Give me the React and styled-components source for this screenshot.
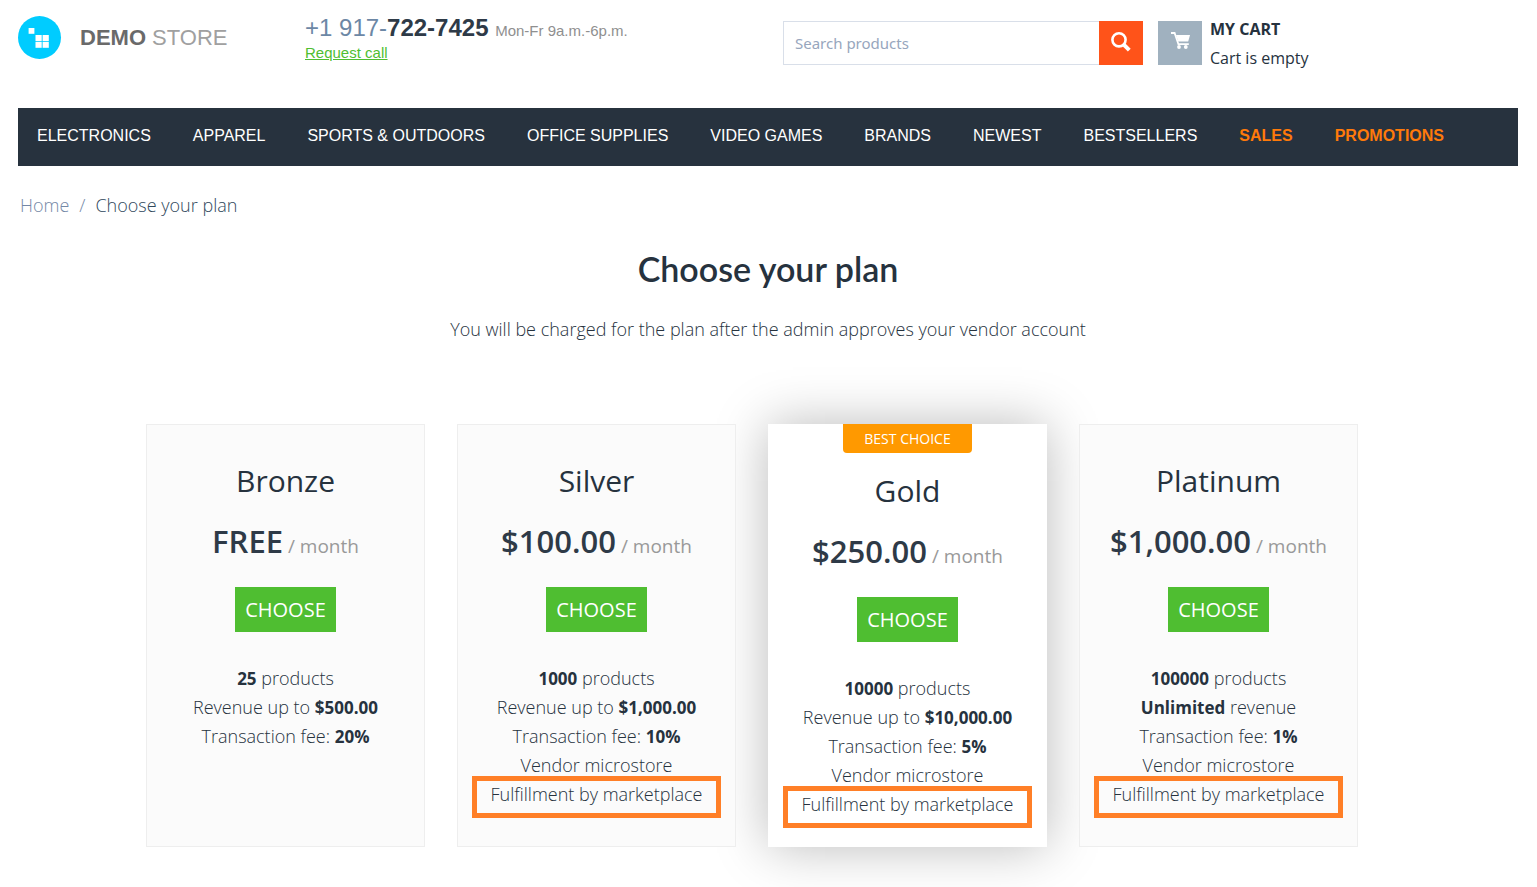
import React from "react";
import styled, { createGlobalStyle } from "styled-components";

const GlobalStyle = createGlobalStyle`
  *, *::before, *::after { box-sizing: border-box; }
  body {
    margin: 0;
    background: #fff;
    color: #26323e;
    font-family: "Open Sans", sans-serif;
    font-size: 18px;
    font-weight: 300;
    line-height: 29px;
  }
`;

const Page = styled.div`
  padding: 0 19px 40px 18px;
`;

const Header = styled.header`
  display: grid;
  grid-template-columns: 287fr 478fr 735fr;
  align-items: start;
  height: 108px;
  font-weight: 400;
`;

const Logo = styled.a`
  display: flex;
  align-items: center;
  gap: 18px;
  padding-top: 16px;
  text-decoration: none;
  white-space: nowrap;
`;

const LogoText = styled.span`
  font-family: "Liberation Sans", sans-serif;
  font-size: 22px;
  line-height: 24px;
  color: #a0a0a0;

  b { color: #6a6a6a; }
`;

const Contact = styled.div`
  padding-top: 14px;
  font-family: "Liberation Sans", sans-serif;
  white-space: nowrap;
`;

const Phone = styled.div`
  font-size: 24px;
  line-height: 28px;
  color: #6c87a5;

  b { color: #2e3a47; }
  small { font-size: 15px; color: #8f8f8f; }
`;

const RequestLink = styled.a`
  display: block;
  font-size: 15px;
  line-height: 16px;
  color: #4fbe31;
`;

const Tools = styled.div`
  display: flex;
  gap: 15px;
  padding-top: 21px;
`;

const Search = styled.form`
  display: flex;
  flex: 0 1 360px;
  height: 44px;
`;

const SearchInput = styled.input`
  flex: 1;
  min-width: 0;
  padding: 0 11px;
  border: 1px solid #d9dfe9;
  border-right: 0;
  border-radius: 0;
  font-family: "Noto Sans", sans-serif;
  font-size: 15px;
  color: #2e3a47;
  outline: none;

  &::placeholder { color: #97a6bd; opacity: 1; }
`;

const SearchButton = styled.button`
  display: flex;
  justify-content: center;
  width: 44px;
  padding: 10px 0 0;
  border: 0;
  background: #ff5319;
  cursor: pointer;
`;

const Cart = styled.a`
  display: flex;
  gap: 8px;
  color: inherit;
  text-decoration: none;
  font-size: 16px;
  white-space: nowrap;
`;

const CartIcon = styled.span`
  display: flex;
  justify-content: center;
  width: 44px;
  height: 44px;
  padding-top: 10px;
  background: #a0b1bf;
`;

const CartText = styled.span`
  display: flex;
  flex-direction: column;
  margin-top: -6px;

  b { font-weight: 700; }
`;

const Nav = styled.nav`
  display: flex;
  flex-wrap: wrap;
  gap: 0 42px;
  padding: 14px 19px 16px;
  background: #27323e;
  font-family: "Liberation Sans", sans-serif;
  font-size: 16px;
  line-height: 28px;
  white-space: nowrap;
`;

const NavLink = styled.a`
  color: ${(p) => (p.$hot ? "#ff7a0a" : "#fff")};
  font-weight: ${(p) => (p.$hot ? 700 : 400)};
  text-decoration: none;
`;

const Breadcrumbs = styled.nav`
  display: flex;
  gap: 10px;
  padding: 25px 2px 0;
  line-height: 28px;
  color: #7488a6;

  a { color: inherit; text-decoration: none; }
`;

const Current = styled.span`
  color: #2f485c;
`;

const Intro = styled.div`
  text-align: center;
`;

const Title = styled.h1`
  margin: 26px 0 0;
  font-family: Lato, sans-serif;
  font-size: 34px;
  font-weight: 600;
  line-height: 48px;
`;

const Lead = styled.p`
  margin: 22px 0 0;
`;

const Plans = styled.section`
  display: flex;
  gap: 32px;
  max-width: 1244px;
  margin: 80px auto 0;
  padding-right: 32px;
`;

const Card = styled.article`
  display: flex;
  flex: 1;
  flex-direction: column;
  align-items: center;
  min-width: 0;
  padding-bottom: 27px;
  border: 1px solid ${(p) => (p.$best ? "#fff" : "#eee")};
  background: ${(p) => (p.$best ? "#fff" : "#fbfbfb")};
  box-shadow: ${(p) => (p.$best ? "0 0 50px rgba(0, 0, 0, 0.27)" : "none")};
  position: relative;
  z-index: ${(p) => (p.$best ? 0 : 1)};
  text-align: center;
`;

const Badge = styled.span`
  position: absolute;
  top: -1px;
  padding: 0 21px;
  border-radius: 0 0 4px 4px;
  background: #ff9900;
  color: #fff;
  font-size: 14px;
  font-weight: 400;
  line-height: 29px;
  white-space: nowrap;
`;

const PlanName = styled.h2`
  margin: ${(p) => (p.$best ? 46 : 36)}px 0 0;
  font-size: 30px;
  font-weight: 400;
  line-height: 40px;
`;

const Price = styled.div`
  margin-top: 20px;
  font-size: 19px;
  font-weight: 400;
  line-height: 40px;
  color: #999;
  white-space: nowrap;

  b { font-size: 31px; font-weight: 600; color: #2e3a47; }
`;

const Choose = styled.button`
  height: 45px;
  margin: 21px 0 32px;
  padding: 0 10px;
  border: 0;
  background: #4fbe31;
  color: #fff;
  font-family: inherit;
  font-size: 20px;
  cursor: pointer;
`;

const Features = styled.ul`
  display: flex;
  flex-direction: column;
  align-items: center;
  margin: 0;
  padding: 0;
  list-style: none;
  white-space: nowrap;

  b { font-size: 17px; font-weight: 700; }
`;

const Marked = styled.li`
  position: relative;

  &::after {
    content: "";
    position: absolute;
    inset: -4px -19px -9px;
    border: 5px solid #ff7f27;
  }
`;

const categories = [
  "Electronics", "Apparel", "Sports & Outdoors", "Office Supplies",
  "Video Games", "Brands", "Newest", "Bestsellers",
];

const plans = [
  { name: "Bronze", price: "FREE", products: "25", revenue: "$500.00", fee: "20%" },
  { name: "Silver", price: "$100.00", products: "1000", revenue: "$1,000.00", fee: "10%", full: true },
  { name: "Gold", price: "$250.00", products: "10000", revenue: "$10,000.00", fee: "5%", full: true, best: true },
  { name: "Platinum", price: "$1,000.00", products: "100000", fee: "1%", full: true },
];

function LogoMark() {
  return (
    <svg width="44" height="44" viewBox="0 0 44 44" aria-hidden="true">
      <circle cx="21.5" cy="21.5" r="21.5" fill="#00ccff" />
      <g fill="#fff">
        <rect x="10.6" y="12" width="5.8" height="5.8" />
        <rect x="17.5" y="19" width="6.2" height="6.2" />
        <rect x="24.6" y="19" width="6.2" height="6.2" />
        <rect x="17.5" y="26" width="6.2" height="5.8" />
        <rect x="24.6" y="26" width="6.2" height="5.8" />
      </g>
    </svg>
  );
}

function SearchIcon() {
  return (
    <svg width="22" height="22" viewBox="0 0 22 22" fill="none" stroke="#fff" aria-hidden="true">
      <circle cx="9" cy="8.8" r="6.6" strokeWidth="2.6" />
      <path d="M13.5 13.3L19.3 19.1" strokeWidth="4" />
    </svg>
  );
}

function CartGlyph() {
  return (
    <svg width="20" height="20" viewBox="0 0 20 20" aria-hidden="true">
      <path d="M1 2H4.6L8.4 13.2H18.8" fill="none" stroke="#fff" strokeWidth="1.8" />
      <path d="M6 4H20L18.2 10.6H8.2Z" fill="#fff" />
      <circle cx="9" cy="16" r="1.9" fill="#fff" />
      <circle cx="15.8" cy="16" r="1.9" fill="#fff" />
    </svg>
  );
}

function Plan({ plan }) {
  return (
    <Card $best={plan.best}>
      {plan.best && <Badge>BEST CHOICE</Badge>}
      <PlanName $best={plan.best}>{plan.name}</PlanName>
      <Price><b>{plan.price}</b> / month</Price>
      <Choose type="button">CHOOSE</Choose>
      <Features>
        <li><b>{plan.products}</b> products</li>
        {plan.revenue
          ? <li>Revenue up to <b>{plan.revenue}</b></li>
          : <li><b>Unlimited</b> revenue</li>}
        <li>Transaction fee: <b>{plan.fee}</b></li>
        {plan.full && <li>Vendor microstore</li>}
        {plan.full && <Marked>Fulfillment by marketplace</Marked>}
      </Features>
    </Card>
  );
}

export default function App() {
  return (
    <Page>
      <GlobalStyle />
      <Header>
        <Logo href="#">
          <LogoMark />
          <LogoText><b>DEMO</b> STORE</LogoText>
        </Logo>
        <Contact>
          <Phone>+1 917-<b>722-7425</b> <small>Mon-Fr 9a.m.-6p.m.</small></Phone>
          <RequestLink href="#">Request call</RequestLink>
        </Contact>
        <Tools>
          <Search onSubmit={(e) => e.preventDefault()}>
            <SearchInput type="text" aria-label="Search products" placeholder="Search products" />
            <SearchButton type="submit" aria-label="Search"><SearchIcon /></SearchButton>
          </Search>
          <Cart href="#">
            <CartIcon><CartGlyph /></CartIcon>
            <CartText><b>MY CART</b><span>Cart is empty</span></CartText>
          </Cart>
        </Tools>
      </Header>
      <Nav>
        {categories.map((c) => <NavLink key={c} href="#">{c.toUpperCase()}</NavLink>)}
        <NavLink href="#" $hot>SALES</NavLink>
        <NavLink href="#" $hot>PROMOTIONS</NavLink>
      </Nav>
      <Breadcrumbs aria-label="Breadcrumb">
        <a href="#">Home</a>
        <span>/</span>
        <Current>Choose your plan</Current>
      </Breadcrumbs>
      <main>
        <Intro>
          <Title>Choose your plan</Title>
          <Lead>You will be charged for the plan after the admin approves your vendor account</Lead>
        </Intro>
        <Plans>
          {plans.map((p) => <Plan key={p.name} plan={p} />)}
        </Plans>
      </main>
    </Page>
  );
}
